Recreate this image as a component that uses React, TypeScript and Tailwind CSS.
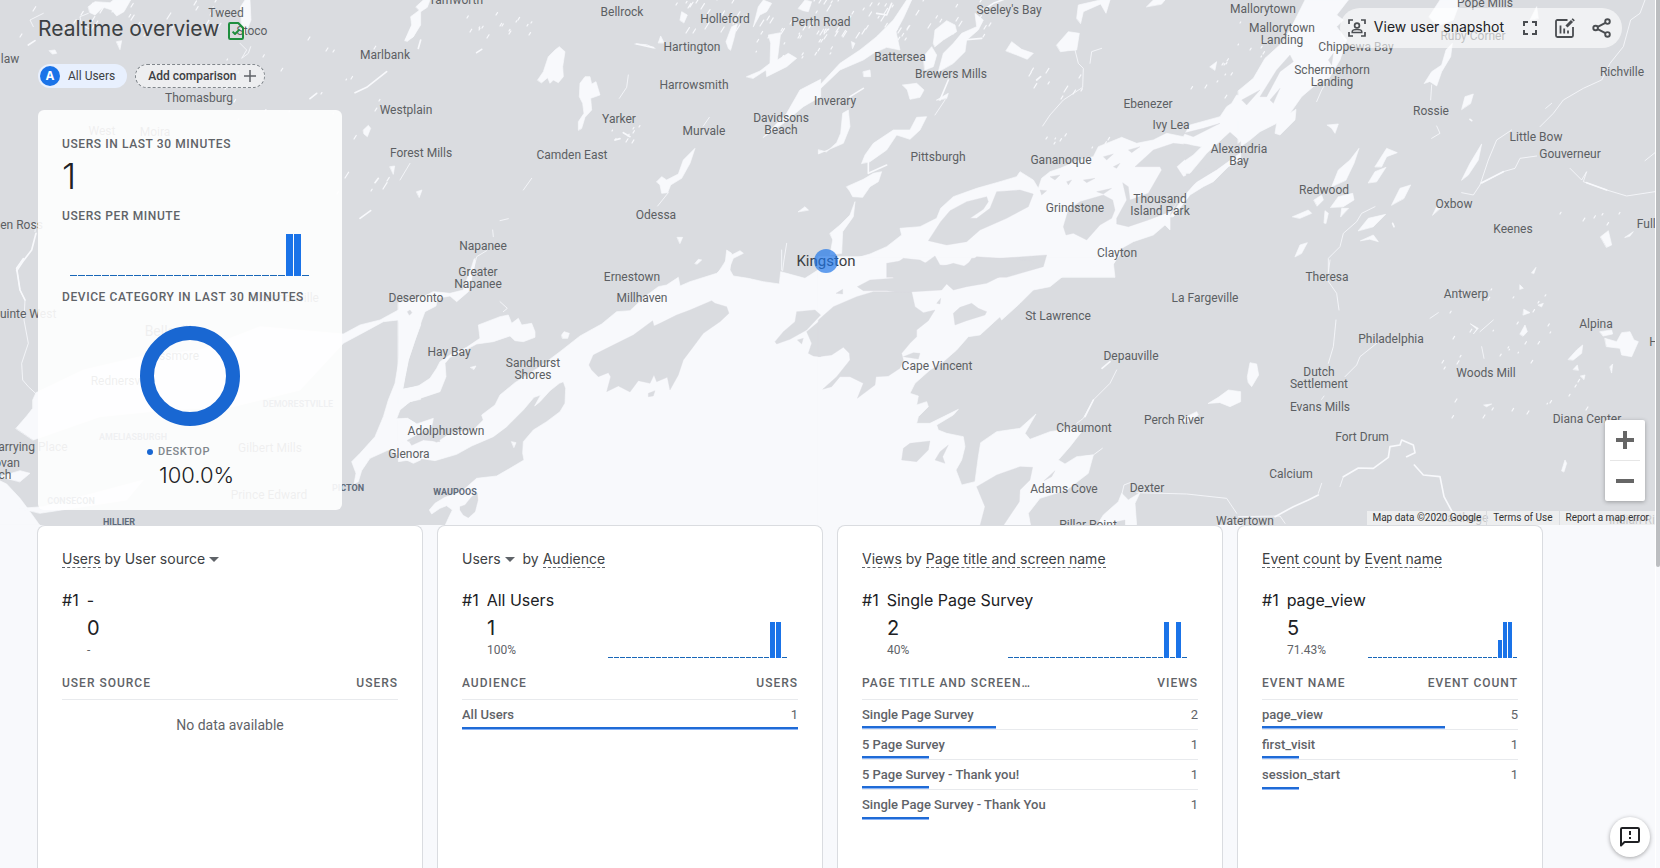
import React from "react";

type Pt = [number, number];

/* ---------- Map drawing ---------- */

// Each sheet is drawn on a grid three times finer than the map itself.
type Sheet = { x: number; y: number; water: string; land?: string; mid?: string; thin?: string };

const sheets: Sheet[] = [
  {
    x: 0, y: 0,
    water:
      "M265 20L285 5L330 8L340 0H392L372 35L350 48L335 30L310 22L285 45L270 38ZM1215 120L1235 75L1232 50L1262 28V75L1240 110L1222 124ZM722 20L735 0H750L753 60L735 105L725 90ZM1090 390L1105 376L1112 385L1102 410L1092 402ZM148 152L165 150L170 160L158 162ZM350 125L365 122L360 148ZM1170 500L1184 498L1180 522Z",
    mid: "M1065 278L1100 262L1160 215M50 812L68 785L95 750L108 700M1255 145L1262 120M930 296L950 280M85 135L105 122M1080 655L1112 632M1125 548L1135 535",
    thin: "M265 40L240 50L245 75L275 90M105 695L108 670L90 680M720 130L740 150L725 175L745 160L752 140M630 45L640 20M130 40L90 60L100 80",
  },
  {
    x: 0, y: 260,
    water:
      "M48 505L80 468L98 445V420L108 398L250 330L420 290L600 270L780 200L1030 222L1080 195L1140 180L1195 150L1225 130L1262 108V195L1245 240L1225 300L1215 350L1208 388L1240 382L1262 376V418L1230 425L1200 450L1190 476L1222 475L1250 492L1220 540L1225 552L1262 540V600L1240 610L1215 598L1165 570L1110 595L1085 632L1075 665L1062 672L1068 640L1055 605L1080 580L1125 530L1150 470L1165 420L1185 370L1195 310L1200 270L1205 210L1195 180L1150 185L1095 215L1030 250L900 390L700 440L500 450L300 470L100 540ZM-5 660L20 672L60 715L90 755L115 790L120 796H-5ZM0 650L60 632L90 640L60 665ZM60 745L130 740L430 660L380 720L120 760Z",
    thin: "M70 -4L50 25L60 90L75 120L72 180L85 250L65 310L68 360L85 380L112 405",
    mid: "M70 -4L50 25L60 90L75 120",
  },
  {
    x: 400, y: 0,
    water:
      "M413 240L430 215L445 170L465 150L478 140L495 155L488 200L490 230L475 248L460 240L450 250L443 233L425 248ZM535 390L535 365L552 340L548 310L538 290L540 250L555 230L570 230L575 252L588 245L600 285L572 295L575 330L555 352L545 385ZM770 545L785 530L800 540L835 522L850 480L885 445L870 490L845 535L812 555L803 578L785 580L780 555ZM985 145L978 125L995 80L1012 72L1002 115L992 150ZM1040 230L1080 213L1110 190L1112 130L1105 105L1142 98L1132 180L1165 160L1190 175L1160 200L1100 230L1098 210L1060 235ZM1090 412L1160 340L1200 270L1262 238V290L1210 320L1150 370ZM958 812L985 770L1020 752L1030 760L1000 775L985 812ZM15 122L35 80L55 50L52 85L40 110ZM48 20L70 0L90 0L82 22L62 35ZM1060 80L1075 20L1090 0L1115 10L1100 35L1080 45ZM1195 25L1215 0L1235 5L1225 35L1210 32ZM50 575L66 570L58 592ZM775 128L782 108L792 128ZM832 712L848 712L840 730ZM1195 635L1215 620L1225 630ZM840 60L845 35L862 45L852 68ZM885 790L895 778L905 780L892 792Z",
    thin: "M685 225L680 262L658 295M705 132L740 134L765 145M805 578L773 618M928 352L910 378M278 690L280 710M300 662L325 656M395 535L370 570M1160 730L1152 780L1148 812M260 752L230 770L220 810M30 490L0 540",
    mid: "M230 158L245 148M645 420L660 416M670 398L690 410M710 132L760 143",
  },
  {
    x: 400, y: 260,
    water:
      "M135 797L145 775L157 750L140 737L120 745L95 762L88 750L105 730L135 712L170 700L190 690L230 655L290 648L330 625L372 600L368 580L370 545L400 510L440 485L480 455L495 430L497 385L490 365L478 370L450 392L420 425L404 438L422 405L402 412L370 450L320 500L280 530L215 558L170 583L105 602L60 595L-5 605V550L30 545L80 535L110 548L150 520L220 510L250 480L245 465L285 435L300 405L345 368L420 320L480 275L540 228L605 192L650 155L690 152L735 110L775 80L800 75L835 52L840 78L870 65L950 40L975 15L980 -30L995 -20L990 30L1000 48L1045 55L1090 65L1138 72L1142 35L1160 40L1215 55L1262 25V797ZM-5 128L60 115L100 95L150 100L190 90L200 60L215 20L222 -2L226 0L214 60L205 95L170 125L150 108L112 115L108 138L75 155L60 195L45 240L25 300L15 350L8 388L55 378L90 355L110 325L120 305L150 285L200 262L240 235L235 195L300 170L325 165L335 190L355 175L365 195L395 190L405 215L405 232L370 245L345 242L330 228L280 245L230 252L200 268L150 292L135 310L138 350L120 395L75 410L30 425L-5 450ZM485 225L492 215L508 220L503 235H488ZM335 545L348 548L342 562ZM212 322L228 318L222 328ZM-5 480L22 475L50 492L100 475L95 500L20 540L-5 545Z",
    land: "M180 740L195 735L215 710L232 700L234 720L225 755L205 773L190 765L180 750ZM567 315L580 285L620 265L700 225L758 182L762 198L780 190L830 165L870 150L935 122L945 130L980 140L987 160L960 185L910 220L880 260L850 300L835 345L810 390L802 352L770 365L762 345L750 370L715 362L690 396L655 378L620 395L632 350L625 338L595 350L575 330ZM745 400L765 392L760 408L745 410ZM1125 245L1150 215L1185 185L1190 155L1245 150L1262 165L1220 210L1170 238L1130 252ZM1192 240L1210 235L1205 252ZM1225 280L1235 250L1220 215L1262 180V290L1240 288ZM22 155L30 150L36 158L28 166ZM28 545L60 530L110 520L120 545L70 540L35 556Z",
    thin: "M225 -5L220 30M300 125L322 145L310 155M1145 -30V30",
  },
  {
    x: 820, y: 0,
    water:
      "M-5 775L105 775L150 762L200 740L245 705L240 685L300 680L350 655L362 625L400 590L470 565L540 545L590 530L600 515L640 540L655 565L665 535L690 515L720 505L780 480L820 470L835 440L905 412L950 430L1000 420L1040 400L1090 410L1110 375L1200 350L1220 320L1235 310L1250 285L1264 290V425L1230 395L1160 460L1110 520L1070 520L1062 505L1120 465L1145 440L1090 430L1100 560L1050 640L1050 690L1035 675L1000 705L940 725L905 745L880 790L885 832H-5ZM1050 650L1100 580L1130 545L1190 510L1262 458V480L1225 500L1180 545L1150 560L1110 585L1060 650ZM-5 260L60 190L120 150L170 110L220 60L260 0H275L250 55L228 95L240 150L200 142L160 160L130 180L60 210L-5 272ZM340 130L345 90L380 62L405 75L410 95L370 120L345 140ZM310 170L335 140L350 165L340 200L315 210ZM355 215L370 160L400 130L425 100L470 80L465 40L490 60L475 90L440 120L435 155L400 190ZM248 255L290 250L312 270L300 292L270 298L262 270ZM125 490L135 465L160 430L220 390L270 390L290 352L320 350L300 390L270 418L230 405L200 450L150 485ZM80 560L130 538L160 520L185 515L175 545L150 560L128 592L98 590L90 575ZM30 700L60 675L90 645L105 605L100 650L68 695L65 760L30 765L38 720ZM558 152L575 125L605 148L640 160L622 178L590 165ZM710 135L745 95L778 100L770 150L745 152L722 155ZM130 215L150 210L152 230H132ZM1170 200L1190 185L1185 210ZM770 55L775 15L840 0H870L858 40L842 12L790 35L782 70ZM980 20L1000 0H1035L1025 12ZM350 300L385 280L380 295ZM20 455L50 428L62 400L68 340L85 330L90 380L70 430L-5 462V450ZM450 655L500 615L508 580L530 578L510 620L485 635ZM95 125L105 130L98 145Z",
    land: "M325 722L362 665L390 632L440 605L500 590L505 605L490 628L450 655L470 655L510 625L530 575L600 570L640 582L625 620L560 655L480 690L440 725L380 735ZM730 680L745 630L780 605L850 585L878 600L885 630L875 655L840 675L800 720L760 700L738 705ZM890 655L920 600L908 548L925 560L930 600L985 580L1025 510L1020 500L945 500L1000 450L1060 430L1110 435L1120 455L1070 500L1090 530L1160 505L1262 425V455L1190 508L1130 545L1095 575L1050 635L985 660L925 680L890 672ZM200 790L240 783L300 800L345 768L360 795L430 800L470 770L540 775L680 765L670 800L560 832H200ZM690 530L720 525L705 540ZM740 545L755 540L745 555ZM850 470L880 462L860 480ZM880 500L900 490L890 505ZM790 540L825 535L800 548ZM660 570L680 572L665 585ZM925 450L960 440L935 458ZM830 575L875 565L850 582ZM1090 400L1150 385L1200 370L1120 410Z",
    mid: "M90 290L130 265M385 240L360 300M145 480V520L200 495M430 120L485 115M490 30L520 10L560 -5M880 790L900 760M650 240L662 230M170 40L200 45L215 10",
    thin: "M765 150L775 190L790 205L788 262L730 300L690 345L668 378M345 345L375 300M810 190L815 155L845 145",
  },
  {
    x: 820, y: 260,
    water:
      "M-5 -10H885L840 12L790 35L740 40L690 80L640 90L600 130L545 180L540 170L480 225L445 230L410 270L370 305L330 330L285 370L270 400L295 408L290 435L320 425L325 440L295 470L290 490L330 490L415 448L400 465L350 495L355 510L380 520L430 530L435 560L425 600L408 630L425 675L465 665L475 590L482 548L530 515L600 505L648 462L615 520L630 538L690 515L760 505L785 515L750 560L715 600L735 612L770 590L820 585L805 640L740 690L660 715L625 760L632 797H-5ZM1165 430L1195 412L1225 390L1262 395V425L1230 440L1200 428ZM830 797L850 765L895 725L905 700L925 720L960 698L945 730L950 797ZM1080 480L1130 455L1135 465L1100 488Z",
    land: "M-5 180L40 140L110 110L160 95H275L285 140L310 158L345 150L325 182L290 210L290 230L270 250L245 280L250 300L240 325L205 348L168 350L165 375L112 415L130 370L90 350L60 350L35 380L8 388L50 350L90 300L88 280L70 262L35 285L-5 290ZM112 80L150 60L220 55L215 20L250 -5L300 0L345 25L400 10L440 20L455 -5L580 -5L640 5L620 30L550 45L500 70L440 80L400 90L380 72L365 90L280 95L250 98L200 92L130 92ZM400 160L420 142L455 130L475 145L500 155L495 165L440 182L405 195ZM245 600L250 565L270 550L330 543L325 570L290 605ZM345 600L360 575L385 555L368 590L375 610ZM672 662L705 632L695 650ZM250 290L280 278L300 280L295 297ZM480 797L495 740L470 680L530 645L600 620L638 622L630 660L600 690L598 725L550 797ZM48 100L68 88V102ZM350 130L362 115L360 132ZM890 785L915 780V797H880Z",
    thin: "M890 330L870 370L820 420L790 475L770 490M785 590L820 585L847 565M905 705L912 675L930 668M950 698L1100 702L1220 715L1250 760M60 350L100 360L128 385",
    mid: "M846 325L870 305M820 420L795 470M568 25L578 10",
  },
  {
    x: 1240, y: 0,
    water:
      "M-5 272L40 235L75 175L130 125L165 60L195 0H325L290 45L310 60L290 80L320 120L300 180L270 230L220 260L185 290L150 340L168 328L165 360L120 405L105 400L110 370L60 395L30 420L-5 445ZM553 250L575 215L605 195L618 150L637 130L632 170L605 215L590 258L570 245ZM567 50L600 0H662L640 60L600 75L580 65ZM665 328L675 290L700 282L692 310ZM665 540L690 490L725 432L715 480L685 525ZM275 560L295 510L330 480L357 445L342 490L318 540ZM272 622L295 590L338 580L342 600L310 620ZM405 500L440 445L472 458L440 470L425 500ZM385 548L405 515L438 502L410 545ZM455 615L480 565L512 555L492 595ZM355 692L385 655L437 643L400 680ZM362 722L400 705L415 725L390 718ZM165 770L180 735L202 728L185 760ZM1082 710L1105 692L1115 735L1100 742ZM222 600L245 585L250 600L232 618ZM158 650L205 630L215 640L180 655ZM252 668L255 632L265 640L258 670ZM302 650L305 625L325 625ZM262 375L295 372L285 400L275 385ZM578 645L590 620L600 625ZM870 60L890 20L895 55ZM1155 712L1180 695L1170 708Z",
    land: "M60 290L110 210L150 165L160 185L120 215L80 290ZM265 180L280 160L275 195ZM5 300L60 270L20 315ZM90 300L120 265L100 310Z",
    thin: "M1215 0L1200 40L1172 60L1150 140L1110 190L1085 240L1030 265L970 300L940 340L900 380M725 550L790 515L825 505L840 475L890 468M990 505L1025 540L1040 515L1030 545L1100 570L1160 588L1245 575M815 390L770 420L745 480L720 555L700 585L665 578M405 620L365 640L350 665L310 700L300 740L265 775V815M270 230L245 270L230 305M575 255L572 300M590 378L600 400L575 415M917 325L935 310M1215 482L1245 458",
    mid: "M725 548L790 515M690 358L695 362M458 670L462 680M1040 548L1100 570",
  },
  {
    x: 1240, y: 260,
    water:
      "M22 350L30 308L50 312L56 345L35 380L25 368ZM1095 235L1130 245L1145 218L1170 215L1182 240L1195 245L1175 290L1145 285L1140 265L1100 260ZM985 298L1010 270L1028 255L1025 280L1000 300ZM840 222L855 195L862 215L850 228ZM965 632L975 600L980 610L972 635ZM692 192L715 205L700 222L710 208ZM1000 328L1012 315L1015 330ZM1110 320L1118 312L1115 338ZM852 148L870 158L850 165ZM875 38L888 22L882 40ZM840 75L850 85L840 88ZM895 135L910 130L905 140ZM732 435L755 432L740 440ZM1080 215L1115 210L1118 222L1090 228ZM1022 348L1035 345L1032 358Z",
    thin: "M270 0L262 60L290 100L297 150M288 180L280 260L265 310M410 250L360 290L350 315L315 350M300 680L310 650M252 408L245 418M570 175L595 158M720 215L760 180M725 260L732 295M-5 770L120 768L135 790M245 670L235 700",
    mid: "M310 650L355 624L400 625L445 592L450 560L480 555L485 540L520 555L525 578L500 590M105 770L160 740L205 720L235 705M523 615L550 645L600 650L612 710L640 762",
  },
];

const speckleFields: { box: [number, number, number, number]; count: number; size: number }[] = [
  { box: [20, 0, 215, 40], count: 26, size: 2 },
  { box: [225, 40, 170, 80], count: 20, size: 1 },
  { box: [330, 120, 60, 80], count: 6, size: 2 },
  { box: [465, 10, 70, 28], count: 16, size: 1 },
  { box: [670, 0, 150, 36], count: 30, size: 2 },
  { box: [745, 30, 90, 35], count: 24, size: 1 },
  { box: [820, 0, 90, 42], count: 34, size: 2 },
  { box: [905, 0, 90, 45], count: 16, size: 2 },
  { box: [1020, 70, 70, 30], count: 10, size: 2 },
  { box: [1190, 20, 50, 80], count: 12, size: 1 },
  { box: [1030, 135, 80, 15], count: 8, size: 1 },
  { box: [610, 125, 35, 20], count: 8, size: 1 },
  { box: [1440, 290, 110, 80], count: 26, size: 1 },
  { box: [1550, 210, 80, 20], count: 6, size: 1 },
  { box: [1450, 380, 140, 40], count: 12, size: 1 },
  { box: [1250, 40, 30, 25], count: 6, size: 1 },
];

function buildSpeckles() {
  let seed = 7;
  const next = () => (seed = (seed * 16807) % 2147483647) / 2147483647;
  let d = "";
  for (const { box, count, size } of speckleFields) {
    for (let i = 0; i < count; i++) {
      const at: Pt = [Math.round(box[0] + next() * box[2]), Math.round(box[1] + next() * box[3])];
      const l = size + next() * 3 * size;
      d += `M${at[0]} ${at[1]}l${(l * 0.5).toFixed(1)} ${(-l * 0.8).toFixed(1)}`;
    }
  }
  return d;
}
const speckles = buildSpeckles();

const towns: [string, number, number][] = [
  ["Tweed", 226, 13], ["Stoco", 252, 31], ["law", 10, 59], ["Marlbank", 385, 55], ["Westplain", 406, 110],
  ["Forest Mills", 421, 153], ["Thomasburg", 199, 98], ["West", 102, 131], ["Moira", 155, 132],
  ["Glen Ross", 16, 225], ["Quinte West", 24, 314], ["Shannonville", 285, 298], ["Rossmore", 172, 356],
  ["Rednersville", 123, 381], ["Carrying Place", 29, 447], ["Gilbert Mills", 270, 448], ["ovan", 7, 463], ["ch", 5, 475],
  ["Prince Edward", 269, 495], ["Tamworth", 456, 0], ["Bellrock", 622, 12], ["Holleford", 725, 19],
  ["Perth Road", 821, 22], ["Hartington", 692, 47], ["Harrowsmith", 694, 85], ["Yarker", 619, 119],
  ["Davidsons", 781, 118], ["Beach", 781, 130], ["Murvale", 704, 131], ["Camden East", 572, 155], ["Odessa", 656, 215],
  ["Napanee", 483, 246], ["Greater", 478, 272], ["Napanee", 478, 284], ["Ernestown", 632, 277], ["Millhaven", 642, 298],
  ["Deseronto", 416, 298], ["Hay Bay", 449, 352], ["Sandhurst", 533, 363], ["Shores", 533, 375],
  ["Adolphustown", 446, 431], ["Glenora", 409, 454], ["Seeley's Bay", 1009, 10], ["Battersea", 900, 57],
  ["Brewers Mills", 951, 74], ["Inverary", 835, 101], ["Ebenezer", 1148, 104], ["Ivy Lea", 1171, 125],
  ["Pittsburgh", 938, 157], ["Gananoque", 1061, 160], ["Alexandria", 1239, 149], ["Bay", 1239, 161],
  ["Grindstone", 1075, 208], ["Thousand", 1160, 199], ["Island Park", 1160, 211], ["Clayton", 1117, 253],
  ["La Fargeville", 1205, 298], ["St Lawrence", 1058, 316], ["Depauville", 1131, 356], ["Cape Vincent", 937, 366],
  ["Chaumont", 1084, 428], ["Perch River", 1174, 420], ["Adams Cove", 1064, 489], ["Dexter", 1147, 488],
  ["Pillar Point", 1088, 525], ["Watertown", 1245, 521], ["Mallorytown", 1263, 9], ["Mallorytown", 1282, 28],
  ["Landing", 1282, 40], ["Chippewa Bay", 1356, 47], ["Schermerhorn", 1332, 70], ["Landing", 1332, 82],
  ["Pope Mills", 1485, 3], ["Ruby Corner", 1473, 36], ["Richville", 1622, 72], ["Rossie", 1431, 111],
  ["Little Bow", 1536, 137], ["Gouverneur", 1570, 154], ["Redwood", 1324, 190], ["Oxbow", 1454, 204],
  ["Keenes", 1513, 229], ["Fullerville", 1662, 224], ["Theresa", 1327, 277], ["Antwerp", 1466, 294],
  ["Alpina", 1596, 324], ["Harrisville", 1676, 342], ["Philadelphia", 1391, 339], ["Dutch", 1319, 372],
  ["Settlement", 1319, 384], ["Woods Mill", 1486, 373], ["Evans Mills", 1320, 407], ["Diana Center", 1587, 419],
  ["Fort Drum", 1362, 437], ["Calcium", 1291, 474], ["Carthage", 1464, 518], ["Indian River", 1640, 520],
];

const hamlets: [string, number, number][] = [
  ["DEMORESTVILLE", 298, 404], ["AMELIASBURGH", 133, 437], ["CONSECON", 71, 501], ["PICTON", 348, 488],
  ["HILLIER", 119, 522], ["WAUPOOS", 455, 492],
];

function RegionMap() {
  const place = (s: Sheet) => `translate(${s.x} ${s.y}) scale(0.33333)`;
  return (
    <svg
      className="absolute inset-0 h-full w-full bg-[#dadce0] font-['Roboto',sans-serif]"
      viewBox="0 0 1655 525"
      preserveAspectRatio="xMidYMid slice"
      role="img"
      aria-label="Map of active users around Kingston"
    >
      <g fill="#f8f9fc" stroke="#f8f9fc" strokeLinejoin="round" strokeLinecap="round">
        {sheets.map((s, i) => (
          <g key={i} transform={place(s)}>
            <path d={s.water} strokeWidth="2" />
            {s.mid && <path d={s.mid} fill="none" strokeWidth="5" />}
            {s.thin && <path d={s.thin} fill="none" strokeWidth="2.5" />}
          </g>
        ))}
        <path d={speckles} fill="none" strokeWidth="1.2" />
      </g>
      <g fill="#dadce0" stroke="#dadce0" strokeLinejoin="round">
        {sheets.map((s, i) => s.land && (
          <g key={i} transform={place(s)}>
            <path d={s.land} strokeWidth="1" />
          </g>
        ))}
      </g>
      <g fill="#5c5f63" fontSize="12" textAnchor="middle">
        {towns.map(([name, x, y], i) => (
          <text key={i} x={x} y={y + 4}>{name}</text>
        ))}
        <text x="172" y="336" fontSize="14">Belleville</text>
      </g>
      <g fill="#5f6b7a" fontSize="9" fontWeight="700" textAnchor="middle">
        {hamlets.map(([name, x, y]) => (
          <text key={name} x={x} y={y + 3}>{name}</text>
        ))}
      </g>
      <text x="826" y="266" fontSize="15" fill="#3c4043" textAnchor="middle">Kingston</text>
      <circle cx="826" cy="261" r="12" fill="#1a73e8" fillOpacity="0.68" />
    </svg>
  );
}

/* ---------- Charts ---------- */

function MinuteBars({ pitch, height, bars, label }: { pitch: number; height: number; bars: Record<number, number>; label: string }) {
  return (
    <svg width={pitch * 30} height={height} role="img" aria-label={label} shapeRendering="crispEdges" className="block shrink-0">
      {Array.from({ length: 30 }, (_, i) => {
        const h = bars[i] ? Math.round(bars[i] * height) : 1;
        return (
          <rect key={i} x={i * pitch} y={height - h} width={pitch - 1} height={h} fill={bars[i] ? "#1a73e8" : "#1967b8"} />
        );
      })}
    </svg>
  );
}

/* ---------- Report cards ---------- */

const brand = "font-['Inter',sans-serif]";

function Term({ children }: { children: React.ReactNode }) {
  return <span className="border-b border-dashed border-[#5f6368]">{children}</span>;
}

function Picker({ children }: { children: React.ReactNode }) {
  return (
    <button type="button" className="inline-flex items-center gap-1">
      {children}
      <svg width="10" height="5" viewBox="0 0 10 5" fill="#5f6368" aria-hidden="true"><path d="M0 0H10L5 5Z" /></svg>
    </button>
  );
}

type Row = { name: string; value: number; share: number };
type CardProps = {
  title: React.ReactNode;
  lead: string;
  value: string;
  share: string;
  chart?: React.ReactNode;
  dimension: string;
  metric: string;
  rows: Row[];
};

function ReportCard({ title, lead, value, share, chart, dimension, metric, rows }: CardProps) {
  return (
    <section className="min-w-0 rounded-t-lg border border-b-0 border-[#dadce0] bg-white px-6 pt-[23px]">
      <h2 className={`${brand} truncate text-sm leading-5 text-[#3c4043]`}>{title}</h2>
      <div className={`${brand} mt-[19px] flex gap-2 text-base leading-6 text-[#202124]`}>
        <span>#1</span>
        <span className="truncate">{lead}</span>
      </div>
      <div className="flex items-end justify-between pl-[25px]">
        <div>
          <div className={`${brand} mt-0.5 text-xl leading-7 text-[#202124]`}>{value}</div>
          <div className="text-xs leading-4 text-[#5f6368]">{share}</div>
        </div>
        {chart}
      </div>
      <table className="mt-[10px] w-full table-fixed border-collapse text-[#5f6368]">
        <thead>
          <tr className="h-[31px] border-b border-[#e8eaed] text-xs tracking-[1px]">
            <th scope="col" className="w-3/5 truncate text-left font-medium">{dimension}</th>
            <th scope="col" className="text-right font-medium">{metric}</th>
          </tr>
        </thead>
        <tbody>
          {rows.map((r) => (
            <tr key={r.name} className="relative h-[30px] border-b border-[#e8eaed] text-[13px] leading-5 last:border-b-0">
              <th scope="row" className="truncate pt-0.5 text-left font-medium">
                {r.name}
                <span
                  className="absolute -bottom-px left-0 h-[3px] border-b border-[#8ab4f8] bg-[#1f6bd6]"
                  style={{ width: `${r.share}%` }}
                />
              </th>
              <td className="pt-0.5 text-right">{r.value}</td>
            </tr>
          ))}
          {rows.length === 0 && (
            <tr>
              <td colSpan={2} className="pt-[15px] text-center text-sm leading-5">No data available</td>
            </tr>
          )}
        </tbody>
      </table>
    </section>
  );
}

/* ---------- Toolbar icons ---------- */

function SnapshotIcon() {
  return (
    <svg width="18" height="18" viewBox="0 0 18 18" fill="none" stroke="#4a4d51" strokeWidth="1.7" aria-hidden="true">
      <path d="M1 5V1H5M13 1H17V5M17 13V17H13M5 17H1V13" />
      <circle cx="9" cy="6.5" r="2.4" />
      <path d="M4.2 13.6V12.8C4.2 11.2 7 10.6 9 10.6S13.8 11.2 13.8 12.8V13.6Z" strokeWidth="1.5" />
    </svg>
  );
}

function ExpandIcon() {
  return (
    <svg width="14" height="14" viewBox="0 0 14 14" fill="none" stroke="#4a4d51" strokeWidth="2" aria-hidden="true">
      <path d="M1 5V1H5M9 1H13V5M13 9V13H9M5 13H1V9" />
    </svg>
  );
}

function EditChartIcon() {
  return (
    <svg width="20" height="20" viewBox="0 0 20 20" fill="none" stroke="#4a4d51" strokeWidth="1.8" aria-hidden="true">
      <path d="M12.5 2H2.4C1.6 2 1 2.6 1 3.4V17.6C1 18.4 1.6 19 2.4 19H16.6C17.4 19 18 18.4 18 17.6V9" />
      <path d="M5.5 7.5V15.5M9.2 10.5V15.5M13 12.5V15.5" />
      <path d="M11.5 8.5L17 3" strokeWidth="3" />
      <path d="M17.6 2.4L18.8 1.2" strokeWidth="3" />
    </svg>
  );
}

function ShareIcon() {
  return (
    <svg width="20" height="20" viewBox="0 0 20 20" fill="none" stroke="#4a4d51" strokeWidth="1.9" aria-hidden="true">
      <circle cx="15.5" cy="3.6" r="2.3" />
      <circle cx="3.6" cy="10" r="2.3" />
      <circle cx="15.5" cy="16.4" r="2.3" />
      <path d="M5.7 8.9L13.4 4.8M5.7 11.1L13.4 15.2" />
    </svg>
  );
}

const panelLabel = "text-xs leading-5 font-medium tracking-wider text-[#5f6368]";

export default function App() {
  return (
    <div className="flex h-screen overflow-hidden bg-[#f8f9fc] font-['Roboto',sans-serif] text-[#202124]">
      <main className="flex min-w-0 flex-1 flex-col">
        <div className="relative">
          <RegionMap />

          <header className="relative flex items-start justify-between pr-[33px] pl-[38px]">
            <div className="pt-[15px]">
              <div className="flex items-center gap-[9px]">
                <h1 className={`${brand} text-[21px] leading-7 text-[#3c4043]`}>Realtime overview</h1>
                <svg width="16" height="18" viewBox="0 0 16 18" fill="none" stroke="#1e8e3e" strokeWidth="2" strokeLinejoin="round" className="mt-1" aria-hidden="true">
                  <path d="M1 2.2C1 1.5 1.5 1 2.2 1H10.2L15 5.8V15.8C15 16.5 14.5 17 13.8 17H2.2C1.5 17 1 16.5 1 15.8Z" />
                  <path d="M4.6 9.6L7 12L11.6 7.4" />
                </svg>
              </div>
              <div className="mt-[21px] flex gap-2">
                <button type="button" className="flex h-6 items-center gap-2 rounded-full bg-[#e8f0fe] pr-3 pl-0.5 text-xs text-[#3c4043]">
                  <span className={`${brand} flex size-5 items-center justify-center rounded-full bg-[#1a73e8] text-xs font-bold text-white`}>A</span>
                  All Users
                </button>
                <button type="button" className="flex h-6 items-center gap-2 rounded-full border border-dashed border-[#80868b] bg-white/50 pr-2 pl-3 text-xs font-medium text-[#3c4043]">
                  Add comparison
                  <svg width="12" height="12" viewBox="0 0 12 12" stroke="#5f6368" strokeWidth="1.5" aria-hidden="true"><path d="M6 0V12M0 6H12" /></svg>
                </button>
              </div>
            </div>

            <div className="mt-2 flex h-10 items-center rounded-full bg-white/60 pr-[10px] pl-2">
              <button type="button" className={`${brand} flex items-center gap-2 text-sm leading-5 text-[#202124]`}>
                <SnapshotIcon />
                <span className="pb-0.5">View user snapshot</span>
              </button>
              <button type="button" aria-label="Full screen" className="ml-[19px]"><ExpandIcon /></button>
              <button type="button" aria-label="Edit comparisons" className="ml-[18px]"><EditChartIcon /></button>
              <button type="button" aria-label="Share this report" className="ml-[17px]"><ShareIcon /></button>
            </div>
          </header>

          <div className="relative px-[38px] pt-[22px] pb-[15px]">
            <section className="w-[304px] rounded-md bg-white/90 px-6 pt-6 pb-[21px]">
              <h2 className={panelLabel}>USERS IN LAST 30 MINUTES</h2>
              <div className={`${brand} mt-0.5 text-4xl leading-10 font-light`}>1</div>
              <h2 className={`${panelLabel} mt-[10px]`}>USERS PER MINUTE</h2>
              <div className="mt-2 pl-2">
                <MinuteBars pitch={8} height={42} bars={{ 27: 1, 28: 1 }} label="Users per minute" />
              </div>
              <h2 className={`${panelLabel} mt-[11px] whitespace-nowrap`}>DEVICE CATEGORY IN LAST 30 MINUTES</h2>
              <svg width="100" height="100" viewBox="0 0 100 100" className="mx-auto mt-[19px] block" role="img" aria-label="Desktop 100.0%">
                <circle cx="50" cy="50" r="43" fill="none" stroke="#1967d2" strokeWidth="14" />
              </svg>
              <div className="mx-auto mt-[18px] w-[86px]">
                <div className="flex items-center gap-[5px] text-[11px] leading-4 font-medium tracking-wider text-[#80868b]">
                  <span className="size-1.5 rounded-full bg-[#1967d2]" />
                  DESKTOP
                </div>
                <div className={`${brand} mt-px pl-3 text-[22px] leading-7 font-light`}>100.0%</div>
              </div>
            </section>
          </div>

          <div className="absolute right-[10px] bottom-6 flex w-10 flex-col items-center rounded-xs bg-white shadow-[0_1px_4px_rgba(0,0,0,0.3)]">
            <button type="button" aria-label="Zoom in" className="flex h-10 w-full items-center justify-center">
              <svg width="18" height="18" viewBox="0 0 18 18" stroke="#666" strokeWidth="4" aria-hidden="true"><path d="M9 0V18M0 9H18" /></svg>
            </button>
            <span className="h-px w-[30px] bg-[#e6e6e6]" />
            <button type="button" aria-label="Zoom out" className="flex h-10 w-full items-center justify-center">
              <svg width="18" height="18" viewBox="0 0 18 18" stroke="#666" strokeWidth="4" aria-hidden="true"><path d="M0 9H18" /></svg>
            </button>
          </div>

          <div className="absolute right-0 bottom-0 flex h-[14px] items-center divide-x divide-[#dadce0] bg-[#f5f5f5]/70 text-[10px] leading-[14px] text-[#333]">
            <span className="px-[5px]">Map data ©2020 Google</span>
            <a href="#terms" className="px-[6px]">Terms of Use</a>
            <a href="#report" className="px-[6px]">Report a map error</a>
          </div>
        </div>

        <div className="grid flex-1 grid-cols-[386fr_386fr_386fr_306fr] gap-[14px] pr-28 pl-[37px]">
          <ReportCard
            title={<><Term>Users</Term> by <Picker>User source</Picker></>}
            lead="-" value="0" share="-"
            dimension="USER SOURCE" metric="USERS" rows={[]}
          />
          <ReportCard
            title={<><Picker>Users</Picker>&nbsp; by <Term>Audience</Term></>}
            lead="All Users" value="1" share="100%"
            chart={<div className="pr-[10px]"><MinuteBars pitch={6} height={36} bars={{ 27: 1, 28: 1 }} label="All Users per minute" /></div>}
            dimension="AUDIENCE" metric="USERS"
            rows={[{ name: "All Users", value: 1, share: 100 }]}
          />
          <ReportCard
            title={<><Term>Views</Term> by <Term>Page title and screen name</Term></>}
            lead="Single Page Survey" value="2" share="40%"
            chart={<div className="pr-[10px]"><MinuteBars pitch={6} height={36} bars={{ 26: 1, 28: 1 }} label="Single Page Survey views per minute" /></div>}
            dimension="PAGE TITLE AND SCREEN…" metric="VIEWS"
            rows={[
              { name: "Single Page Survey", value: 2, share: 40 },
              { name: "5 Page Survey", value: 1, share: 20 },
              { name: "5 Page Survey - Thank you!", value: 1, share: 20 },
              { name: "Single Page Survey - Thank You", value: 1, share: 20 },
            ]}
          />
          <ReportCard
            title={<><Term>Event count</Term> by <Term>Event name</Term></>}
            lead="page_view" value="5" share="71.43%"
            chart={<MinuteBars pitch={5} height={36} bars={{ 26: 0.5, 27: 1, 28: 1 }} label="page_view events per minute" />}
            dimension="EVENT NAME" metric="EVENT COUNT"
            rows={[
              { name: "page_view", value: 5, share: 71.43 },
              { name: "first_visit", value: 1, share: 14.29 },
              { name: "session_start", value: 1, share: 14.29 },
            ]}
          />
        </div>
      </main>

      <div className="w-[5px] border-l border-white" aria-hidden="true">
        <div className="h-[567px] rounded-b-xs bg-[#bcbec1]" />
      </div>

      <button
        type="button"
        aria-label="Send feedback"
        className="fixed right-[10px] bottom-[11px] flex size-10 items-center justify-center rounded-full bg-white shadow-[0_1px_4px_rgba(0,0,0,0.35)]"
      >
        <svg width="20" height="20" viewBox="0 0 20 20" fill="none" stroke="#202124" strokeWidth="2" strokeLinejoin="round" aria-hidden="true">
          <path d="M1 18.5V2.2C1 1.5 1.5 1 2.2 1H17.8C18.5 1 19 1.5 19 2.2V13.8C19 14.5 18.5 15 17.8 15H4.5Z" />
          <path d="M10 4V8M10 10V12" />
        </svg>
      </button>
    </div>
  );
}
